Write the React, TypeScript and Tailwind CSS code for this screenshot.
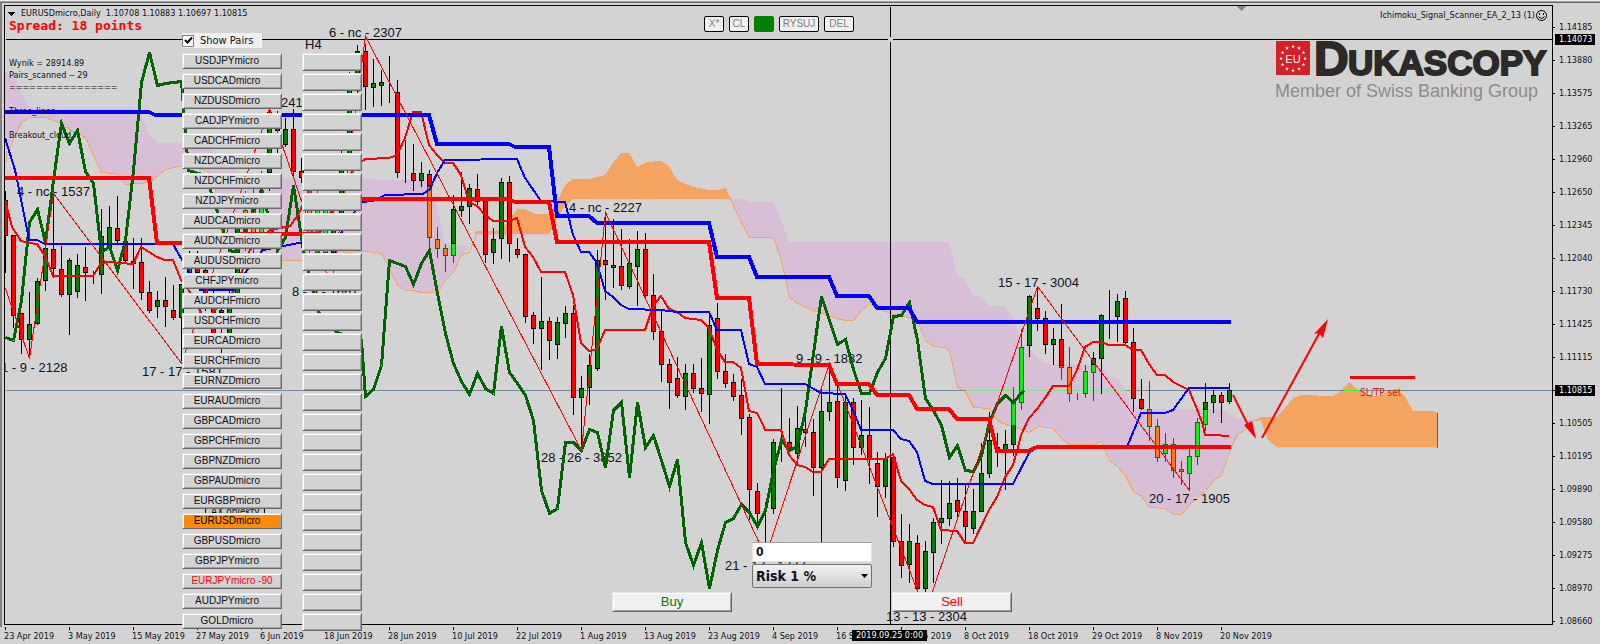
import { useState } from "react";

type Tone = "r" | "g" | "o" | "l";
type Candle = [x: number, high: number, top: number, bottom: number, low: number, tone: Tone];

const CANDLES: Candle[] = [
  [5, 190, 200, 235, 272, "r"], [13, 235, 235, 315, 327, "r"], [21, 313, 313, 339, 353, "r"],
  [29, 291, 324, 339, 356, "g"], [37, 277, 281, 323, 324, "g"], [45, 243, 248, 280, 290, "g"],
  [53, 193, 249, 268, 277, "r"], [61, 245, 269, 294, 296, "r"], [69, 257, 260, 294, 334, "g"],
  [77, 253, 265, 291, 297, "g"], [85, 246, 267, 272, 300, "r"], [93, 270, 274, 274, 283, "g"],
  [101, 208, 236, 274, 293, "g"], [109, 205, 227, 247, 250, "g"], [117, 195, 228, 240, 242, "r"],
  [125, 241, 241, 260, 263, "r"], [133, 237, 261, 263, 288, "r"], [141, 237, 262, 292, 299, "r"],
  [149, 280, 292, 310, 312, "r"], [157, 290, 300, 306, 317, "g"], [165, 276, 300, 306, 326, "r"],
  [173, 284, 310, 317, 319, "r"], [181, 284, 284, 317, 360, "g"], [189, 250, 262, 274, 280, "g"],
  [197, 250, 262, 272, 275, "r"], [205, 262, 270, 300, 310, "r"], [213, 290, 300, 334, 340, "r"],
  [221, 300, 310, 312, 352, "g"], [229, 280, 308, 333, 336, "g"], [237, 220, 225, 294, 300, "g"],
  [245, 190, 210, 234, 250, "o"], [253, 180, 205, 235, 255, "o"], [261, 170, 190, 232, 252, "l"],
  [269, 106, 112, 172, 190, "g"], [277, 110, 118, 130, 155, "g"], [285, 117, 129, 144, 146, "g"],
  [293, 108, 129, 171, 175, "r"], [301, 157, 171, 177, 182, "r"], [309, 180, 190, 250, 255, "o"],
  [317, 185, 200, 252, 262, "l"], [325, 195, 210, 252, 270, "l"], [333, 200, 215, 252, 283, "g"],
  [341, 150, 160, 215, 240, "g"], [349, 71, 90, 160, 170, "g"], [357, 44, 51, 90, 95, "g"],
  [365, 43, 51, 86, 109, "r"], [373, 58, 83, 87, 106, "g"], [381, 69, 82, 85, 105, "g"],
  [389, 55, 82, 82, 102, "g"], [397, 79, 92, 172, 177, "r"], [405, 139, 173, 173, 182, "g"],
  [413, 143, 173, 180, 190, "r"], [421, 161, 173, 180, 186, "g"], [429, 186, 186, 237, 253, "o"],
  [429, 169, 174, 185, 186, "r"], [437, 226, 239, 248, 257, "o"], [445, 243, 248, 255, 271, "o"],
  [453, 243, 243, 255, 262, "l"], [453, 194, 209, 243, 243, "g"], [461, 171, 206, 210, 216, "g"],
  [469, 183, 188, 206, 223, "g"], [477, 173, 189, 201, 206, "r"], [485, 196, 201, 254, 262, "r"],
  [493, 227, 239, 252, 263, "g"], [501, 177, 182, 238, 258, "g"], [509, 175, 182, 243, 261, "r"],
  [517, 237, 249, 254, 257, "r"], [525, 253, 254, 316, 322, "r"], [533, 311, 315, 328, 343, "r"],
  [541, 276, 321, 328, 369, "g"], [549, 316, 321, 340, 359, "r"], [557, 316, 322, 344, 358, "g"],
  [565, 305, 313, 323, 337, "g"], [573, 304, 313, 397, 414, "r"], [581, 375, 388, 397, 448, "g"],
  [589, 353, 365, 387, 404, "g"], [597, 249, 260, 368, 370, "g"], [605, 212, 260, 264, 299, "r"],
  [613, 218, 265, 267, 287, "g"], [621, 228, 266, 285, 289, "r"], [629, 238, 263, 286, 288, "g"],
  [637, 230, 249, 266, 305, "g"], [645, 232, 249, 295, 296, "r"], [653, 273, 295, 331, 339, "r"],
  [661, 308, 331, 364, 381, "r"], [669, 358, 364, 382, 408, "r"], [677, 356, 378, 395, 397, "r"],
  [685, 363, 373, 396, 409, "g"], [693, 363, 373, 388, 392, "r"], [701, 357, 388, 393, 411, "r"],
  [709, 313, 325, 394, 423, "g"], [717, 302, 318, 371, 378, "r"], [725, 353, 371, 383, 387, "r"],
  [733, 373, 382, 396, 400, "r"], [741, 378, 395, 418, 434, "r"], [749, 413, 417, 489, 519, "r"],
  [757, 482, 491, 513, 525, "r"], [765, 501, 508, 508, 542, "g"], [773, 438, 442, 508, 513, "g"],
  [781, 387, 441, 441, 461, "g"], [789, 417, 442, 449, 450, "r"], [797, 405, 428, 453, 463, "g"],
  [805, 414, 429, 432, 446, "r"], [813, 418, 432, 467, 495, "r"], [821, 387, 411, 467, 542, "g"],
  [829, 370, 402, 411, 420, "g"], [837, 385, 401, 477, 487, "r"], [845, 395, 402, 480, 490, "g"],
  [853, 397, 402, 447, 464, "r"], [861, 399, 435, 447, 454, "g"], [869, 406, 435, 459, 483, "r"],
  [877, 451, 463, 486, 516, "r"], [885, 452, 458, 486, 497, "g"], [893, 455, 457, 541, 546, "r"],
  [901, 513, 541, 565, 577, "r"], [909, 523, 541, 564, 582, "g"], [917, 534, 543, 588, 592, "r"],
  [925, 540, 551, 588, 592, "g"], [933, 517, 522, 552, 582, "g"], [941, 479, 518, 522, 543, "g"],
  [949, 480, 503, 518, 525, "g"], [957, 477, 500, 511, 519, "r"], [965, 482, 511, 526, 542, "r"],
  [973, 488, 511, 528, 533, "g"], [981, 442, 473, 511, 511, "g"], [989, 411, 440, 473, 477, "g"],
  [997, 432, 447, 450, 466, "r"], [1005, 429, 444, 449, 489, "g"], [1013, 425, 425, 444, 455, "g"],
  [1013, 386, 402, 425, 425, "l"], [1021, 328, 347, 402, 409, "l"], [1029, 294, 296, 345, 356, "g"],
  [1037, 286, 308, 318, 330, "r"], [1045, 310, 318, 344, 353, "r"], [1053, 327, 339, 344, 364, "g"],
  [1061, 365, 365, 367, 379, "o"], [1061, 303, 339, 365, 365, "r"], [1069, 346, 367, 393, 401, "o"],
  [1077, 392, 394, 394, 399, "l"], [1085, 364, 371, 393, 397, "l"], [1093, 364, 364, 372, 400, "l"],
  [1093, 351, 358, 364, 364, "g"], [1101, 313, 315, 358, 393, "g"], [1109, 289, 315, 315, 338, "g"],
  [1117, 293, 301, 316, 341, "g"], [1125, 290, 298, 342, 344, "r"], [1133, 327, 342, 398, 411, "r"],
  [1141, 378, 399, 408, 409, "r"], [1149, 380, 409, 426, 440, "o"], [1157, 418, 426, 457, 461, "o"],
  [1165, 432, 444, 453, 461, "l"], [1173, 437, 444, 470, 477, "o"], [1181, 460, 469, 471, 484, "o"],
  [1189, 448, 456, 473, 490, "l"], [1197, 417, 422, 456, 464, "l"], [1205, 409, 409, 424, 430, "l"],
  [1205, 382, 402, 409, 409, "g"], [1213, 389, 395, 402, 412, "g"], [1221, 391, 395, 402, 422, "r"],
  [1229, 382, 390, 401, 403, "g"],
];

const TONES: Record<Tone, { fill: string; stroke: string }> = {
  r: { fill: "#ff0000", stroke: "#000000" },
  g: { fill: "#008000", stroke: "#000000" },
  o: { fill: "#ff7a10", stroke: "#007800" },
  l: { fill: "#11ee11", stroke: "#007800" },
};

const CLOUD_LEFT =
  "5,72 14,78 24,98 30,108 132,108 141,113 149,135 157,143 205,143 215,152 245,178 421,180 429,183 437,208 445,243 461,245 470,248 461,254 453,272 445,280 437,292 421,292 413,290 405,290 397,285 389,268 381,253 365,251 343,252 335,260 250,260 222,240 216,200 213,175 205,170 182,165 165,169 149,182 125,184 115,173 101,172 93,155 85,137 72,131 61,123 45,117 29,117 21,122 13,138 5,162";
const CLOUD_LEFT_EDGE =
  "5,162 13,138 21,122 29,117 45,117 61,123 72,131 85,137 93,155 101,172 115,173 125,184 149,182 165,169 182,165 205,170 213,175 216,200 222,240 250,260 335,260 343,252 365,251 381,253 389,268 397,285 405,290 413,290 421,292 437,292 445,280 453,272 461,254 469,252 477,232";
const CLOUD_SUMMER =
  "474,233 477,231 497,231 502,228 510,219 517,209 525,209 535,214 546,214 551,214 558,200 565,185 573,179 589,179 605,175 613,163 621,153 629,153 637,167 647,162 661,161 669,166 677,180 693,187 709,190 717,190 725,188 730,199 572,199 562,210 555,222 549,234 474,234";
const CLOUD_AUTUMN =
  "729,199 743,199 749,202 773,202 781,220 789,242 949,242 957,275 965,279 973,296 981,296 989,306 1005,306 1013,318 1021,343 1029,348 1037,358 1045,363 1053,364 1101,365 1109,376 1117,378 1125,388 1133,405 1141,409 1221,409 1229,414 1237,418 1245,420 1261,418 1253,422 1245,429 1237,434 1230,448 1221,475 1213,480 1205,490 1197,497 1189,504 1181,514 1173,514 1165,508 1149,507 1141,496 1133,491 1125,475 1117,466 1109,460 1101,441 1093,444 1069,444 1061,438 1053,428 1037,426 1029,432 1013,426 1007,425 997,420 989,408 973,407 965,391 957,387 949,350 945,347 933,346 925,340 917,320 909,317 901,316 893,314 885,311 877,308 869,303 861,310 853,320 845,320 837,318 813,310 797,303 789,297 781,260 773,237 749,237 741,222 733,205";
const CLOUD_AUTUMN_EDGE =
  "725,188 733,205 741,222 749,237 773,237 781,260 789,297 797,303 813,310 837,318 845,320 853,320 861,310 869,303 877,308 885,311 893,314 901,316 909,317 917,320 925,340 933,346 945,347 949,350 957,387 965,391 973,407 989,408 997,420 1007,425 1013,426 1029,432 1037,426 1053,428 1061,438 1069,444 1093,444 1101,441 1109,460 1117,466 1125,475 1133,491 1141,496 1149,507 1165,508 1173,514 1181,514 1189,504 1197,497 1205,490 1213,480 1221,475 1230,448 1237,434 1245,429 1253,422";
const CLOUD_FUTURE =
  "1253,422 1261,417 1277,417 1285,408 1293,398 1301,395 1333,396 1341,391 1349,382 1358,390 1370,396 1380,396 1390,390 1398,389 1406,398 1413,411 1430,411 1437,412 1437,447 1277,447 1269,441 1265,432 1261,420";

const SPAN_SLOW = "5,112 149,112 155,115 429,115 437,144 509,144 515,147 549,147 557,216 589,216 597,223 709,223 717,257 749,257 757,277 829,277 837,296 869,296 877,308 909,308 917,322 1231,322";
const BASE_SLOW = "5,178 149,178 157,243 237,243 241,234 318,234 340,199 509,199 515,202 549,202 557,242 709,242 717,298 749,298 757,364 829,365 837,384 869,384 877,395 909,395 917,409 949,409 957,419 989,419 997,451 1029,451 1037,447 1231,447";
const KIJUN = "5,138 15,170 24,214 29,240 37,240 45,244 173,244 182,260 200,290 235,290 247,270 263,250 340,235 361,202 373,201 385,195 423,194 430,189 437,173 445,160 517,159 525,178 541,201 565,202 573,235 581,252 589,252 597,263 605,291 613,297 621,305 629,309 661,310 677,312 709,312 717,330 741,330 749,364 757,367 765,384 805,384 821,393 845,394 853,410 861,430 893,430 901,439 909,441 917,452 925,481 933,484 1013,484 1029,453 1037,447 1127,447 1141,413 1165,413 1173,410 1189,388 1229,388";
const TENKAN = "5,200 12,227 21,241 29,243 37,244 45,256 53,276 93,276 101,263 109,262 133,264 141,247 157,257 165,260 173,260 181,280 190,292 205,320 235,290 250,250 270,230 290,226 298,215 310,190 345,180 361,162 365,159 389,158 397,155 405,138 413,112 421,112 429,145 437,155 445,163 453,163 461,175 469,202 477,206 485,215 493,221 509,221 517,218 525,247 533,257 541,272 565,272 573,295 581,343 589,351 597,349 605,330 645,330 653,306 661,296 669,309 677,312 685,318 701,320 709,328 717,350 725,362 733,362 741,368 749,411 757,413 763,425 765,430 781,430 789,455 797,465 805,467 813,472 821,472 829,459 885,459 893,454 901,481 909,489 917,500 925,505 933,507 941,530 957,531 965,543 973,543 989,510 997,497 1005,477 1013,465 1018,447 1021,435 1029,418 1037,409 1045,398 1053,386 1069,386 1077,370 1085,347 1093,342 1101,342 1109,345 1125,345 1133,350 1141,350 1149,364 1157,375 1165,375 1173,382 1189,390 1197,409 1203,425 1205,435 1213,435 1229,436";
const CHIKOU = "5,337 13,340 21,300 29,222 37,209 45,242 53,180 61,123 69,143 77,130 85,171 93,183 101,252 109,246 117,270 125,240 133,170 141,82 149,52 157,85 165,83 181,81 188,170 205,175 215,205 229,250 237,252 245,230 261,190 277,250 285,237 293,185 303,250 318,312 337,332 361,340 365,396 373,389 381,365 389,260 405,266 413,284 421,263 429,250 437,293 445,333 453,363 461,381 469,394 477,373 485,388 493,393 501,326 509,372 517,383 525,395 533,420 541,490 549,513 557,508 565,442 573,442 581,450 589,429 597,432 605,467 613,410 621,402 629,477 637,402 645,447 653,435 661,460 669,486 677,459 685,542 693,565 701,542 709,588 717,550 725,522 733,518 741,504 749,512 757,526 765,510 773,470 781,440 789,450 797,446 805,410 821,296 837,344 845,339 853,369 861,393 869,393 877,372 885,358 893,316 901,315 909,302 917,340 925,398 933,410 941,425 949,457 957,445 965,470 973,471 981,455 989,422 997,403 1005,395 1013,402 1023,390";
const ZIGZAG = "5,288 29,358 53,193 181,363 269,108 331,287 365,36 581,450 605,212 765,556 829,363 925,611 1037,286 1189,490";

const SWING_LABELS: [number, number, string][] = [
  [329, 37, "6 - nc - 2307"],
  [17, 196, "4 - nc - 1537"],
  [1, 372, "1 - 9 - 2128"],
  [142, 376, "17 - 17 - 1581"],
  [281, 107, "241"],
  [292, 296, "8 - 9 - 1667"],
  [569, 212, "4 - nc - 2227"],
  [541, 462, "28 - 26 - 3852"],
  [796, 363, "9 - 9 - 1832"],
  [998, 287, "15 - 17 - 3004"],
  [725, 570, "21 - 17 - 1777"],
  [886, 621, "13 - 13 - 2304"],
  [1149, 503, "20 - 17 - 1905"],
];

const PRICES = [
  "1.14185", "1.13880", "1.13575", "1.13265", "1.12960", "1.12650", "1.12345", "1.12040", "1.11730", "1.11425",
  "1.11115", "1.10815", "1.10505", "1.10195", "1.09890", "1.09580", "1.09275", "1.08970", "1.08660",
];

const DATES = [
  "23 Apr 2019", "3 May 2019", "15 May 2019", "27 May 2019", "6 Jun 2019", "18 Jun 2019", "28 Jun 2019",
  "10 Jul 2019", "22 Jul 2019", "1 Aug 2019", "13 Aug 2019", "23 Aug 2019", "4 Sep 2019", "16 Sep 2019",
  "26 Sep 2019", "8 Oct 2019", "18 Oct 2019", "29 Oct 2019", "8 Nov 2019", "20 Nov 2019",
];

const PAIRS = [
  "USDJPYmicro", "USDCADmicro", "NZDUSDmicro", "CADJPYmicro", "CADCHFmicro", "NZDCADmicro", "NZDCHFmicro",
  "NZDJPYmicro", "AUDCADmicro", "AUDNZDmicro", "AUDUSDmicro", "CHFJPYmicro", "AUDCHFmicro", "USDCHFmicro",
  "EURCADmicro", "EURCHFmicro", "EURNZDmicro", "EURAUDmicro", "GBPCADmicro", "GBPCHFmicro", "GBPNZDmicro",
  "GBPAUDmicro", "EURGBPmicro", "EURUSDmicro", "GBPUSDmicro", "GBPJPYmicro", "EURJPYmicro -90", "AUDJPYmicro",
  "GOLDmicro",
];

const BEVEL =
  "border border-t-[#e3e3e3] border-l-[#e3e3e3] border-r-[#696969] border-b-[#696969] shadow-[inset_1px_1px_0_#ffffff,inset_-1px_-1px_0_#a0a0a0]";
const UI_FONT = "font-['DejaVu_Sans_Condensed','DejaVu_Sans',sans-serif]";
const ARIAL = "font-['Liberation_Sans',Arial,sans-serif]";

function Line({ points, color, width }: { points: string; color: string; width: number }) {
  return <polyline points={points} fill="none" stroke={color} strokeWidth={width} />;
}

function Star({ x, y }: { x: number; y: number }) {
  return (
    <path
      transform={`translate(${x} ${y})`}
      d="M0,-2 L0.5,-0.6 L1.9,-0.6 L0.8,0.3 L1.2,1.7 L0,0.8 L-1.2,1.7 L-0.8,0.3 L-1.9,-0.6 L-0.5,-0.6 Z"
      fill="#ffffff"
    />
  );
}

function BrokerLogo() {
  return (
    <g className={ARIAL} shapeRendering="auto">
      <rect x="1276" y="41" width="34" height="34" fill="#d62027" />
      {Array.from({ length: 12 }, (_, i) => {
        const a = (i * Math.PI) / 6;
        return <Star key={i} x={1293 + 12 * Math.sin(a)} y={58.5 - 12 * Math.cos(a)} />;
      })}
      <text x="1293" y="63" textAnchor="middle" fontSize="11" fill="#ffffff">EU</text>
      <g fill="#2b2a29" stroke="#2b2a29" fontWeight="700">
        <text x="1314" y="75" fontSize="48" strokeWidth="2">D</text>
        <text x="1348" y="75" fontSize="35" strokeWidth="2">UKASCOPY</text>
      </g>
      <text x="1275" y="97" fontSize="18" fill="#8c8c8c">Member of Swiss Banking Group</text>
    </g>
  );
}

function PriceChart() {
  return (
    <svg viewBox="5 6 1547 618" className="block h-auto w-full" shapeRendering="crispEdges" role="img" aria-label="EURUSD daily chart">
      <polygon points={CLOUD_LEFT} fill="#d8bfd8" />
      <polygon points={CLOUD_AUTUMN} fill="#d8bfd8" />
      <polygon points={CLOUD_SUMMER} fill="#f4a460" />
      <polygon points={CLOUD_FUTURE} fill="#f4a460" />
      <g transform="translate(0.5 0.5)">
        <Line points={CLOUD_LEFT_EDGE} color="#f4a460" width={1} />
        <Line points={CLOUD_AUTUMN_EDGE} color="#f4a460" width={1} />
        <Line points="477,234 549,234" color="#d8bfd8" width={1} />
        <Line points="1277,447 1437,447" color="#d8bfd8" width={1} />
        <Line points="1437,412 1437,447" color="#3070a8" width={1} />
        <Line points="5,390 1552,390" color="#778899" width={1} />
        <Line points="965,390 1125,390" color="#78e888" width={1} />
        <Line points="1343,390 1358,390" color="#30ff20" width={1} />
        <Line points="1395,390 1400,390" color="#30ff20" width={1} />
        <Line points="5,39 1552,39" color="#000000" width={1} />
        <Line points="890,6 890,624" color="#000000" width={1} />
        <rect x="205" y="504" width="59" height="18" fill="#c8c8c8" stroke="#000000" />
      </g>
      <g className={ARIAL} fontSize="13" fill="#101020">
        {SWING_LABELS.map(([x, y, label]) => (
          <text key={label} x={x} y={y}>{label}</text>
        ))}
        <text x="305" y="49">H4</text>
      </g>
      <g transform="translate(0.5 0.5)">
        {CANDLES.map(([x, high, top, bottom, low, tone], i) => (
          <g key={i} stroke={TONES[tone].stroke} fill={TONES[tone].fill}>
            <line x1={x} y1={high} x2={x} y2={low} />
            <rect x={x - 2} y={top} width="4" height={bottom - top} />
          </g>
        ))}
        <Line points={CHIKOU} color="#006400" width={3} />
      </g>
      <Line points={TENKAN} color="#ff0000" width={2} />
      <Line points={KIJUN} color="#0000ff" width={2} />
      <Line points={SPAN_SLOW} color="#0000ff" width={4} />
      <Line points={BASE_SLOW} color="#ff0000" width={4} />
      <g transform="translate(0.5 0.5)">
        <Line points={ZIGZAG} color="#ff0000" width={1} />
        <Line points="1349,377 1414,377" color="#ff0000" width={3} />
      </g>
      <rect x="888" y="37" width="5" height="5" fill="#d3d3d3" />
      <g fill="#ff0000" stroke="#ff0000" shapeRendering="auto">
        <line x1="1233" y1="395" x2="1249" y2="427" strokeWidth="2" />
        <polygon points="1256,439 1244,425 1252,421" strokeWidth="0" />
        <line x1="1262" y1="438" x2="1320" y2="332" strokeWidth="2" />
        <polygon points="1328,319 1314,334 1319,333 1323,338" strokeWidth="0" />
      </g>
      <polygon points="1237,6 1246,6 1241.5,11" fill="#778899" />
      <polygon points="8,12 15,12 11.5,16" fill="#000000" />
      <g className={UI_FONT} fontSize="10">
        <text x="1360" y="396" fill="#d81818">SL/TP set</text>
        <text x="211" y="515" fill="#101020">AX obiekty</text>
      </g>
      <g shapeRendering="auto" fill="none" stroke="#000000">
        <circle cx="1541.5" cy="15.5" r="5" />
        <path d="M1538.5,16.5 q3,3.5 6,0" />
        <path d="M1539.5,13 v2 M1543.5,13 v2" />
      </g>
      <BrokerLogo />
    </svg>
  );
}

function PairPanel() {
  const [shown, setShown] = useState(true);
  const [active, setActive] = useState("EURUSDmicro");
  return (
    <div className="absolute top-[27px] left-[177px]">
      <label className={`flex h-[15px] w-20 items-center bg-[#f0f0f0] text-[11px] leading-none ${UI_FONT}`}>
        <input
          type="checkbox"
          checked={shown}
          onChange={(e) => setShown(e.target.checked)}
          className="peer sr-only"
        />
        <span className="flex size-3 items-center justify-center border border-[#808080] bg-white">
          {shown && (
            <svg viewBox="0 0 9 9" className="size-[9px]" fill="none" stroke="#000000" strokeWidth="2">
              <path d="M1,4 L3.5,6.5 L8,1.5" />
            </svg>
          )}
        </span>
        <span className="pl-1.5 whitespace-nowrap">Show Pairs</span>
      </label>
      {shown && (
        <div className="mt-[5px] flex gap-5">
          <div className={`flex w-[100px] flex-col gap-1 ${ARIAL}`}>
            {PAIRS.map((pair) => (
              <button
                key={pair}
                type="button"
                onClick={() => setActive(pair)}
                className={`h-4 text-center text-[10px] leading-[14px] whitespace-nowrap ${BEVEL} ${
                  pair === active ? "bg-[#ff8c00] text-black" : "bg-[#d3d3d3]"
                } ${pair.includes("-90") ? "text-[#ff0000]" : "pr-2.5 text-[#101020]"}`}
              >
                {pair}
              </button>
            ))}
          </div>
          <div className="flex w-[60px] flex-col gap-0.5">
            {PAIRS.map((pair) => (
              <button key={pair} type="button" aria-label={`${pair} H4`} className={`h-[18px] bg-[#d3d3d3] ${BEVEL}`} />
            ))}
          </div>
        </div>
      )}
    </div>
  );
}

function Toolbar() {
  const base = "h-4 rounded-[2px] border border-black bg-[#f0f0f0] text-[10px] leading-[14px] text-[#808080]";
  return (
    <div className={`absolute top-[10px] left-[699px] flex gap-[5px] ${ARIAL}`}>
      <button type="button" className={`w-5 ${base}`}>X*</button>
      <button type="button" className={`w-5 ${base}`}>CL</button>
      <button type="button" aria-label="Toggle" className="h-4 w-5 rounded-[2px] bg-[#008000]" />
      <button type="button" className={`w-10 ${base}`}>RYSUJ</button>
      <button type="button" className={`w-[30px] ${base}`}>DEL</button>
    </div>
  );
}

function TradePanel() {
  const trade = `h-5 w-[120px] bg-[#f0f0f0] text-center text-[13px] leading-[18px] ${BEVEL} ${ARIAL}`;
  return (
    <div className="absolute top-[536px] left-[607px] flex w-[400px] flex-col">
      <div className={`flex flex-col gap-0.5 self-start pl-[140px] font-bold ${UI_FONT}`}>
        <input
          aria-label="Lot size"
          defaultValue="0"
          className="h-5 w-[120px] border border-[#e3e3e3] border-t-[#a0a0a0] bg-white px-[3px] text-[12px] leading-none"
        />
        <div className="relative h-6 w-[120px]">
          <select
            aria-label="Risk"
            className="size-full appearance-none rounded-[2px] border border-[#707070] bg-linear-to-b from-[#f2f2f2] to-[#cfcfcf] pl-[3px] text-[14px] leading-none"
          >
            <option>Risk 1 %</option>
          </select>
          <svg viewBox="0 0 7 4" className="pointer-events-none absolute top-[10px] right-1 h-1 w-[7px]">
            <path d="M0,0 H7 L3.5,4 Z" fill="#000000" />
          </svg>
        </div>
      </div>
      <div className="mt-1 flex justify-between">
        <button type="button" className={`${trade} text-[#008000]`}>Buy</button>
        <button type="button" className={`${trade} text-[#ff0000]`}>Sell</button>
      </div>
    </div>
  );
}

function PriceAxis() {
  return (
    <div className="relative w-[47px] shrink-0 pt-[17px]">
      <ul className="flex flex-col justify-between gap-[22px]">
        {PRICES.map((price) => (
          <li key={price} className="flex h-[11px] items-center">
            <span className="h-px w-0.5 bg-black" />
            <span className={`flex h-full w-10 items-center pl-1 ${price === "1.10815" ? "bg-black text-white" : ""}`}>{price}</span>
          </li>
        ))}
      </ul>
      <span className="absolute top-[29px] left-0.5 flex h-[11px] w-10 items-center bg-black pl-1 text-white">1.14073</span>
    </div>
  );
}

function TimeAxis() {
  return (
    <div className="relative ml-1 h-[19px] overflow-hidden">
      <ul className="flex">
        {DATES.map((date) => (
          <li key={date} className="w-16 shrink-0 whitespace-nowrap">
            <span className="ml-px block h-[3px] w-px bg-black" />
            <span className="block leading-3">{date}</span>
          </li>
        ))}
      </ul>
      <span className="absolute top-[3px] left-[848px] flex h-[11px] w-[75px] items-center justify-center bg-black whitespace-nowrap text-white">
        2019.09.25 0:00
      </span>
    </div>
  );
}

export default function App() {
  return (
    <main className={`min-h-screen overflow-hidden bg-[#d3d3d3] text-[9px] leading-none text-[#101020] ${UI_FONT}`}>
      <div className="h-0.5 border-b border-[#a0a0a0] bg-[#f0f0f0]" />
      <div className="border-t border-l-2 border-[#696969] border-l-[#808080] pt-0.5 pl-0.5">
        <div className="flex items-start">
          <section className="relative z-10 min-w-0 flex-1 border border-black">
            <PriceChart />
            <h1 className="absolute top-[2px] left-4 leading-[11px] whitespace-pre">
              EURUSDmicro,Daily  1.10708 1.10883 1.10697 1.10815
            </h1>
            <p className="absolute top-3 left-1 font-['DejaVu_Sans_Mono',monospace] text-[13px] leading-[15px] font-bold text-[#ff0000]">
              Spread: 18 points
            </p>
            <div className="absolute top-[51px] left-1 leading-3">
              <p>Wynik = 28914.89</p>
              <p>Pairs_scanned -- 29</p>
              <p>================</p>
              <p className="mt-3">Three_lines</p>
              <p className="mt-3">Breakout_cloud</p>
            </div>
            <p className="absolute top-[3px] right-[17px] leading-3">Ichimoku_Signal_Scanner_EA_2_13 (1)</p>
            <Toolbar />
            <PairPanel />
            <TradePanel />
          </section>
          <PriceAxis />
        </div>
      </div>
      <TimeAxis />
    </main>
  );
}
